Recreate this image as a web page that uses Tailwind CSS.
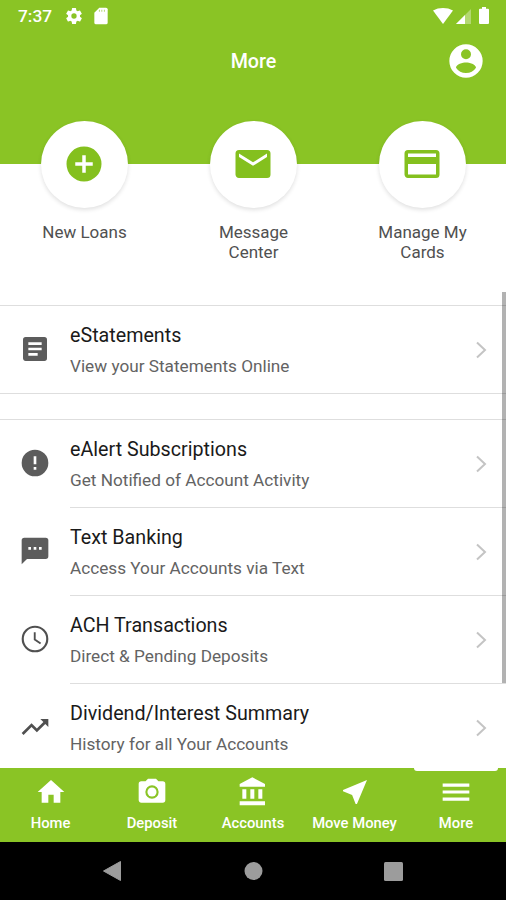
<!DOCTYPE html>
<html lang="en">
<head>
    <meta charset="UTF-8">
    <meta name="viewport" content="width=device-width, initial-scale=1.0">
    <title>More</title>
    <script src="https://cdn.jsdelivr.net/npm/@tailwindcss/browser@4"></script>
</head>
<body class="w-[506px] h-[900px] overflow-hidden bg-white font-['Roboto',sans-serif] flex flex-col">
    <!-- Header -->
    <header class="h-[164px] shrink-0 bg-[#8ac425] text-white">
        <div class="flex h-8 items-center pl-[18px] pr-[15px]">
            <span class="w-[46px] text-[17.300px] font-medium leading-8">7:37</span>
            <svg class="size-5" viewBox="0 0 24 24" fill="currentColor"><path d="M19.14 12.94c.04-.3.06-.61.06-.94s-.02-.64-.07-.94l2.03-1.58a.49.49 0 0 0 .12-.61l-1.92-3.32a.49.49 0 0 0-.59-.22l-2.39.96a7 7 0 0 0-1.62-.94l-.36-2.54a.48.48 0 0 0-.48-.41h-3.84a.47.47 0 0 0-.47.41l-.36 2.54a7.4 7.4 0 0 0-1.62.94l-2.39-.96a.48.48 0 0 0-.59.22L2.74 8.87a.47.47 0 0 0 .12.61l2.03 1.58a6 6 0 0 0 0 1.88l-2.03 1.58a.49.49 0 0 0-.12.61l1.92 3.32c.12.22.37.29.59.22l2.39-.96c.5.38 1.03.7 1.62.94l.36 2.54c.05.24.24.41.48.41h3.84c.24 0 .44-.17.47-.41l.36-2.54a7.4 7.4 0 0 0 1.62-.94l2.39.96c.22.08.47 0 .59-.22l1.92-3.32a.47.47 0 0 0-.12-.61zM12 15.2A3.2 3.2 0 1 1 12 8.8a3.2 3.2 0 0 1 0 6.4z"/></svg>
            <svg class="ml-[7px] size-5" viewBox="0 0 24 24" fill="currentColor"><path d="M18 2h-8L4 8v12a2 2 0 0 0 2 2h12a2 2 0 0 0 2-2V4a2 2 0 0 0-2-2z"/><path d="M9.5 4.500h1v2.500h-1zm3 0h1v2.500h-1zm3 0h1v2.500h-1z" fill="#a5d157"/></svg>
            <div class="ml-auto flex items-center">
                <svg class="h-4 w-[20px]" viewBox="0 0 20 16" fill="currentColor"><path d="M10 16 0 2.5C6-.8 14-.8 20 2.5z"/></svg>
                <svg class="ml-[3px] h-4 w-[15px]" viewBox="0 0 15 16" fill="currentColor"><path d="M0 16 15 1v15z" opacity=".35"/><path d="M0 16 9 7v9z"/></svg>
                <svg class="ml-[8px] mr-[2px] h-[17px] w-[10px] -translate-y-px" viewBox="0 0 10 17" fill="currentColor"><path d="M3 0h4v1.7h2a1 1 0 0 1 1 1V16a1 1 0 0 1-1 1H1a1 1 0 0 1-1-1V2.7a1 1 0 0 1 1-1h2z"/></svg>
            </div>
        </div>
        <div class="grid h-[58px] grid-cols-[1fr_auto_1fr] items-center pr-5">
            <h1 class="col-start-2 pl-[21px] pt-[2px] text-[19.700px] font-medium">More</h1>
            <svg class="size-10 justify-self-end" viewBox="0 0 24 24" fill="currentColor"><path d="M12 2a10 10 0 1 0 0 20 10 10 0 0 0 0-20zm0 3a3 3 0 1 1 0 6 3 3 0 0 1 0-6zm0 14.2a7.2 7.2 0 0 1-6-3.22c.03-1.99 4-3.08 6-3.08s5.97 1.09 6 3.08a7.2 7.2 0 0 1-6 3.22z"/></svg>
        </div>
    </header>

    <!-- Quick actions -->
    <section class="relative -mt-[43px] grid h-[184px] shrink-0 grid-cols-[168px_170px_168px] text-center text-[17px] leading-5 text-[#505050]">
        <div class="flex flex-col items-center">
            <div class="flex size-[87px] items-center justify-center rounded-full bg-white pb-[2px] text-[#84c01e] shadow-[0_2px_4px_rgba(0,0,0,0.12)]">
                <svg class="size-[42px]" viewBox="0 0 24 24" fill="currentColor"><path d="M12 2a10 10 0 1 0 0 20 10 10 0 0 0 0-20zm5 11h-4v4h-2v-4H7v-2h4V7h2v4h4z"/></svg>
            </div>
            <p class="mt-[14px] pl-px">New Loans</p>
        </div>
        <div class="flex flex-col items-center">
            <div class="flex size-[87px] items-center justify-center rounded-full bg-white pb-[2px] text-[#84c01e] shadow-[0_2px_4px_rgba(0,0,0,0.12)]">
                <svg class="size-[42px]" viewBox="0 0 24 24" fill="currentColor"><path d="M20 4H4a2 2 0 0 0-2 2v12c0 1.100.9 2 2 2h16a2 2 0 0 0 2-2V6a2 2 0 0 0-2-2zm0 4-8 5-8-5V6l8 5 8-5z"/></svg>
            </div>
            <p class="mt-[14px] pl-px">Message<br>Center</p>
        </div>
        <div class="flex flex-col items-center">
            <div class="flex size-[87px] items-center justify-center rounded-full bg-white pb-[2px] text-[#84c01e] shadow-[0_2px_4px_rgba(0,0,0,0.12)]">
                <svg class="size-[42px]" viewBox="0 0 24 24" fill="currentColor"><path d="M20 4H4a2 2 0 0 0-2 2v12c0 1.100.9 2 2 2h16a2 2 0 0 0 2-2V6a2 2 0 0 0-2-2zm0 14H4v-6h16zm0-10H4V6h16z"/></svg>
            </div>
            <p class="mt-[14px] pl-px">Manage My<br>Cards</p>
        </div>
    </section>

    <!-- Menu list -->
    <main class="h-[463px] shrink-0 overflow-hidden">
        <ul class="border-y border-[#dedede]">
            <li class="flex h-[87px] items-center">
                <svg class="mx-[19px] mb-[2px] size-8 shrink-0 text-[#5c5c5c]" viewBox="0 0 24 24" fill="currentColor"><path d="M19 3H5a2 2 0 0 0-2 2v14c0 1.100.9 2 2 2h14a2 2 0 0 0 2-2V5a2 2 0 0 0-2-2zm-5 14H7v-2h7zm3-4H7v-2h10zm0-4H7V7h10z"/></svg>
                <div class="flex-1 pt-[2px]">
                    <h2 class="text-[19.700px] leading-[30px] text-[#1a1a1a]">eStatements</h2>
                    <p class="text-[17.200px] leading-[30px] text-[#636363]">View your Statements Online</p>
                </div>
                <svg class="mr-[19px] h-[18px] w-[14px] text-[#c4c4c4]" viewBox="0 0 14 18" fill="none" stroke="currentColor" stroke-width="2"><path d="m4 1.500 8 7.500-8 7.500"/></svg>
            </li>
        </ul>
        <ul class="mt-[25px] border-t border-[#dedede]">
            <li class="flex h-[88px] items-center">
                <svg class="mx-[19px] mb-[2px] size-8 shrink-0 text-[#5c5c5c]" viewBox="0 0 24 24" fill="currentColor"><path d="M12 2a10 10 0 1 0 0 20 10 10 0 0 0 0-20zm1 15h-2v-2h2zm0-4h-2V7h2z"/></svg>
                <div class="flex h-full flex-1 items-center border-b border-[#dedede]">
                    <div class="flex-1 pt-[2px]">
                        <h2 class="text-[19.700px] leading-[30px] text-[#1a1a1a]">eAlert Subscriptions</h2>
                        <p class="text-[17.200px] leading-[30px] text-[#636363]">Get Notified of Account Activity</p>
                    </div>
                    <svg class="mr-[19px] h-[18px] w-[14px] text-[#c4c4c4]" viewBox="0 0 14 18" fill="none" stroke="currentColor" stroke-width="2"><path d="m4 1.500 8 7.500-8 7.500"/></svg>
                </div>
            </li>
            <li class="flex h-[88px] items-center">
                <svg class="mx-[19px] mb-[2px] size-8 shrink-0 text-[#5c5c5c]" viewBox="0 0 24 24" fill="currentColor"><path d="M20 2H4a2 2 0 0 0-2 2v18l4-4h14a2 2 0 0 0 2-2V4a2 2 0 0 0-2-2zM9 11H7V9h2zm4 0h-2V9h2zm4 0h-2V9h2z"/></svg>
                <div class="flex h-full flex-1 items-center border-b border-[#dedede]">
                    <div class="flex-1 pt-[2px]">
                        <h2 class="text-[19.700px] leading-[30px] text-[#1a1a1a]">Text Banking</h2>
                        <p class="text-[17.200px] leading-[30px] text-[#636363]">Access Your Accounts via Text</p>
                    </div>
                    <svg class="mr-[19px] h-[18px] w-[14px] text-[#c4c4c4]" viewBox="0 0 14 18" fill="none" stroke="currentColor" stroke-width="2"><path d="m4 1.500 8 7.500-8 7.500"/></svg>
                </div>
            </li>
            <li class="flex h-[88px] items-center">
                <svg class="mx-[19px] mb-[2px] size-8 shrink-0 text-[#505050]" viewBox="0 0 24 24" fill="none" stroke="currentColor"><circle cx="12" cy="12" r="9.200" stroke-width="1.600"/><path d="M11.800 7v5.400l4.400 3" stroke-width="1.400"/></svg>
                <div class="flex h-full flex-1 items-center border-b border-[#dedede]">
                    <div class="flex-1 pt-[2px]">
                        <h2 class="text-[19.700px] leading-[30px] text-[#1a1a1a]">ACH Transactions</h2>
                        <p class="text-[17.200px] leading-[30px] text-[#636363]">Direct &amp; Pending Deposits</p>
                    </div>
                    <svg class="mr-[19px] h-[18px] w-[14px] text-[#c4c4c4]" viewBox="0 0 14 18" fill="none" stroke="currentColor" stroke-width="2"><path d="m4 1.500 8 7.500-8 7.500"/></svg>
                </div>
            </li>
            <li class="flex h-[88px] items-center">
                <svg class="mx-[19px] mb-[2px] size-8 shrink-0 text-[#505050]" viewBox="0 0 24 24" fill="currentColor"><path d="m16 6 2.290 2.290-4.880 4.880-4-4L2 16.590 3.410 18l6-6 4 4 6.300-6.290L22 12V6z"/></svg>
                <div class="flex h-full flex-1 items-center border-b border-[#dedede]">
                    <div class="flex-1 pt-[2px]">
                        <h2 class="text-[19.700px] leading-[30px] text-[#1a1a1a]">Dividend/Interest Summary</h2>
                        <p class="text-[17.200px] leading-[30px] text-[#636363]">History for all Your Accounts</p>
                    </div>
                    <svg class="mr-[19px] h-[18px] w-[14px] text-[#c4c4c4]" viewBox="0 0 14 18" fill="none" stroke="currentColor" stroke-width="2"><path d="m4 1.500 8 7.500-8 7.500"/></svg>
                </div>
            </li>
        </ul>
    </main>
    <!-- Scrollbar thumb -->
    <div class="absolute left-[502px] top-[292px] h-[391px] w-1 bg-black/30"></div>

    <!-- Tab bar -->
    <nav class="grid h-[74px] shrink-0 grid-cols-[101px_101px_101px_101px_102px] bg-[#8ac425] text-center text-[14.800px] font-medium leading-5 text-white">
        <a class="flex flex-col items-center pt-2">
            <svg class="size-8" viewBox="0 0 24 24" fill="currentColor"><path d="M10 20v-6h4v6h5v-8h3L12 3 2 12h3v8z"/></svg>
            <span class="mt-[5px]">Home</span>
        </a>
        <a class="flex flex-col items-center pl-px pt-2">
            <svg class="size-8" viewBox="0 0 24 24" fill="currentColor"><path d="M9 2 7.170 4H4a2 2 0 0 0-2 2v12c0 1.100.9 2 2 2h16a2 2 0 0 0 2-2V6a2 2 0 0 0-2-2h-3.170L15 2zm3 15a5 5 0 1 1 0-10 5 5 0 0 1 0 10z"/><circle cx="12" cy="12" r="3.400"/></svg>
            <span class="mt-[5px]">Deposit</span>
        </a>
        <a class="flex flex-col items-center pl-px pt-2">
            <svg class="size-8" viewBox="0 0 24 24" fill="currentColor"><path d="M4 10v7h3v-7zm6 0v7h3v-7zM2 22h19v-3H2zm14-12v7h3v-7zM11.500 1 2 6v2h19V6z"/></svg>
            <span class="mt-[5px]">Accounts</span>
        </a>
        <a class="flex flex-col items-center pl-[2px] pt-2">
            <svg class="size-8" viewBox="0 0 24 24" fill="currentColor"><path d="M21 3 3 10.530v.98l6.840 2.650L12.480 21h.98z"/></svg>
            <span class="mt-[5px] whitespace-nowrap">Move Money</span>
        </a>
        <a class="flex flex-col items-center pl-[2px]">
            <span class="-mb-[3px] h-[3px] w-[84px] rounded-b-sm bg-white"></span>
            <svg class="mt-2 size-8" viewBox="0 0 24 24" fill="currentColor"><path d="M2 5.700h20V8H2zm0 5.200h20v2.300H2zm0 5.300h20v2.300H2z"/></svg>
            <span class="mt-[5px]">More</span>
        </a>
    </nav>

    <!-- Android navigation -->
    <footer class="h-[58px] shrink-0 bg-black text-[#9c9c9c]">
        <svg class="h-[58px] w-[506px]" viewBox="0 0 506 58" fill="currentColor"><path d="M103.500 29 120.500 19.500v19z" stroke="currentColor" stroke-linejoin="round"/><circle cx="253.500" cy="29" r="9"/><rect x="384" y="20" width="19" height="19" rx="1.500"/></svg>
    </footer>
</body>
</html>
